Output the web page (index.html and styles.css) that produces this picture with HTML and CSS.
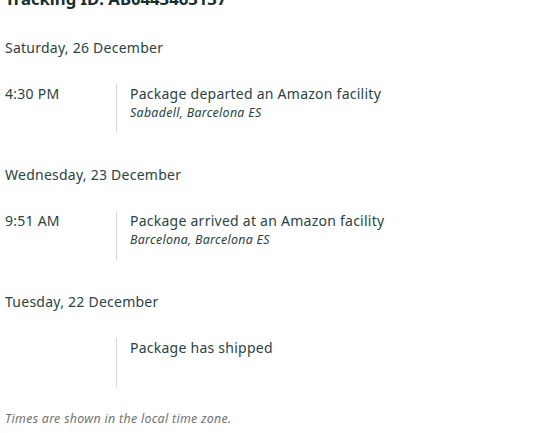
FILE: index.html
```html
<!DOCTYPE html>
<html>
<head>
<meta charset="utf-8">
<link rel="stylesheet" href="styles.css">
</head>
<body>
<div class="page">
  <h1 class="title">Tracking ID: AB0443463137</h1>

  <section class="day">
    <div class="date">Saturday, 26 December</div>
    <div class="event">
      <div class="time">4:30 PM</div>
      <div class="detail">
        <div class="status">Package departed an Amazon facility</div>
        <div class="place">Sabadell, Barcelona ES</div>
      </div>
    </div>
  </section>

  <section class="day">
    <div class="date">Wednesday, 23 December</div>
    <div class="event">
      <div class="time">9:51 AM</div>
      <div class="detail">
        <div class="status">Package arrived at an Amazon facility</div>
        <div class="place">Barcelona, Barcelona ES</div>
      </div>
    </div>
  </section>

  <section class="day">
    <div class="date">Tuesday, 22 December</div>
    <div class="event">
      <div class="time"></div>
      <div class="detail">
        <div class="status">Package has shipped</div>
      </div>
    </div>
  </section>

  <p class="note">Times are shown in the local time zone.</p>
</div>
</body>
</html>
```
FILE: styles.css
```css
html, body {
  margin: 0;
  padding: 0;
  background: #ffffff;
}
body {
  font-family: "Noto Sans", "Open Sans", sans-serif;
  color: #2a4343;
  font-size: 14px;
  line-height: 20px;
  letter-spacing: 0.25px;
}
.page {
  padding-left: 5px;
  margin-top: -13px;
}
.title {
  margin: 0;
  font-size: 16.7px;
  line-height: 24px;
  font-weight: 700;
  letter-spacing: 0;
  color: #16302f;
}
.day {
  display: flex;
  flex-direction: column;
}
.title + .day {
  margin-top: 27px;
}
.day + .day {
  margin-top: 32px;
}
.date {
  height: 20px;
}
.event {
  display: flex;
  margin-top: 26px;
}
.time {
  width: 111px;
  flex: none;
}
.detail {
  border-left: 1px solid #D5D9D9;
  padding-left: 13px;
  min-height: 49px;
  box-sizing: border-box;
}
.place {
  font-size: 12.4px;
  line-height: 18px;
  font-style: italic;
  letter-spacing: 0.3px;
}
.note {
  margin: 23px 0 0;
  font-size: 12.4px;
  line-height: 18px;
  font-style: italic;
  letter-spacing: 0.3px;
  color: #6f7373;
}
```
